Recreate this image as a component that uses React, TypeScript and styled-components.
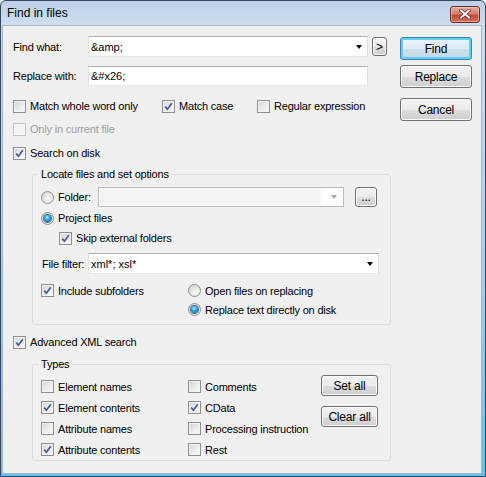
import React from 'react';
import styled, { createGlobalStyle } from 'styled-components';

const GlobalStyle = createGlobalStyle`
  html, body { margin: 0; padding: 0; background: #ffffff; }
  body {
    font-family: "Liberation Sans", Arial, sans-serif;
    font-size: 11px;
    color: #000;
  }
`;

const Window = styled.div`
  box-sizing: border-box;
  width: 486px;
  height: 477px;
  border: 1px solid #34495e;
  border-radius: 6px 6px 0 0;
  background: linear-gradient(#bcd0e9 0, #cfdeef 24px, #a9d0ec 55%, #62c3ef 100%);
  display: flex;
  flex-direction: column;
`;

const TitleBar = styled.div`
  height: 24px;
  flex-shrink: 0;
  display: flex;
  align-items: center;
  justify-content: space-between;
  padding: 0 5px 0 6px;
  font-size: 12px;
`;

const CloseButton = styled.div`
  box-sizing: border-box;
  width: 30px;
  height: 17px;
  margin-top: 2px;
  border: 1px solid #6b2a22;
  border-radius: 3px;
  background: linear-gradient(#e9a99b 0, #d47f6e 45%, #c4493a 55%, #d0705a 100%);
  box-shadow: inset 0 0 0 1px rgba(255, 220, 210, 0.5);
  display: flex;
  align-items: center;
  justify-content: center;
`;

const Client = styled.div`
  flex: 1;
  margin: 0 3px 2px 1px;
  border: 1px solid #9fb6cd;
  background: #f0f0f0;
  padding: 10px 9px 0 10px;
  display: flex;
  align-items: flex-start;
  letter-spacing: -0.2px;
`;

const LeftCol = styled.div`
  flex: 1;
  display: flex;
  flex-direction: column;
`;

const ButtonCol = styled.div`
  width: 72px;
  margin-top: 1px;
  display: flex;
  flex-direction: column;
`;

const Row = styled.div<{ $h?: number; $mt?: number; $indent?: number }>`
  display: flex;
  align-items: center;
  height: ${p => p.$h ?? 20}px;
  margin-top: ${p => p.$mt ?? 0}px;
  padding-left: ${p => p.$indent ?? 0}px;
`;

const OptionRow = styled.div`
  display: grid;
  grid-template-columns: 149px 95px auto;
  align-items: center;
  height: 20px;
  margin-top: 10px;
`;

const FieldLabel = styled.span<{ $w: number; $pl?: number }>`
  width: ${p => p.$w}px;
  padding-left: ${p => p.$pl ?? 0}px;
  box-sizing: border-box;
  flex-shrink: 0;
  white-space: nowrap;
`;

const Field = styled.div<{ $w: number; $h: number; $disabled?: boolean }>`
  box-sizing: border-box;
  width: ${p => p.$w}px;
  height: ${p => p.$h}px;
  flex-shrink: 0;
  display: flex;
  align-items: center;
  border: 1px solid;
  border-color: ${p => (p.$disabled ? '#b8bcc0' : '#abadb3 #dbdfe6 #e3e9ef #e2e3ea')};
  background: #fff;
  padding: ${p => (p.$disabled ? '1px 6px 1px 1px' : '0 5px 0 2px')};
`;

const FieldText = styled.span`
  flex: 1;
  white-space: nowrap;
  letter-spacing: 0;
`;

const DisabledEdit = styled.span`
  flex: 1;
  align-self: stretch;
  margin-right: 10px;
  background: #f4f4f4;
`;

const Arrow = styled.span<{ $disabled?: boolean }>`
  width: 0;
  height: 0;
  border-left: 3.5px solid transparent;
  border-right: 3.5px solid transparent;
  border-top: 4px solid ${p => (p.$disabled ? '#a5a5a5' : '#000')};
`;

const PushButton = styled.div<{ $w: number; $h: number; $default?: boolean; $mt?: number; $ml?: number }>`
  box-sizing: border-box;
  width: ${p => p.$w}px;
  height: ${p => p.$h}px;
  margin-top: ${p => p.$mt ?? 0}px;
  margin-left: ${p => p.$ml ?? 0}px;
  flex-shrink: 0;
  display: flex;
  align-items: center;
  justify-content: center;
  border: 1px solid ${p => (p.$default ? '#3c7fb1' : '#707070')};
  border-radius: 3px;
  background: ${p =>
    p.$default
      ? 'linear-gradient(#eaf4fa 0, #dceaf3 50%, #cddfea 51%, #c4d9e6 100%)'
      : 'linear-gradient(#f2f2f2 0, #ebebeb 50%, #dddddd 51%, #cfcfcf 100%)'};
  box-shadow: ${p => (p.$default ? 'inset 0 0 0 2px #5fcff6' : 'inset 0 0 0 1px #fbfbfb')};
  font-size: 12px;
  letter-spacing: -0.2px;
  white-space: nowrap;
`;

const Choice = styled.label<{ $disabled?: boolean }>`
  display: inline-flex;
  align-items: center;
  gap: 4px;
  white-space: nowrap;
  color: ${p => (p.$disabled ? '#9d9d9d' : '#000')};
`;

const Box = styled.span<{ $disabled?: boolean }>`
  box-sizing: border-box;
  width: 13px;
  height: 13px;
  flex-shrink: 0;
  display: flex;
  align-items: center;
  justify-content: center;
  border: 1px solid ${p => (p.$disabled ? '#c5c5c5' : '#8e8f8f')};
  background: ${p => (p.$disabled ? '#f4f4f4' : 'linear-gradient(135deg, #d3d4d6 0, #eeeeef 60%, #fafafa 100%)')};
  box-shadow: inset 0 0 0 1px ${p => (p.$disabled ? '#f7f7f7' : '#f4f4f4')};
`;

const Circle = styled.span<{ $on?: boolean }>`
  box-sizing: border-box;
  width: 13px;
  height: 13px;
  flex-shrink: 0;
  border-radius: 50%;
  border: 1px solid #8e8f8f;
  background: radial-gradient(circle at 65% 70%, #fbfbfb 0, #e6e6e6 45%, #cfd0d2 100%);
  display: flex;
  align-items: center;
  justify-content: center;

  &::after {
    content: '';
    display: ${p => (p.$on ? 'block' : 'none')};
    width: 7px;
    height: 7px;
    border-radius: 50%;
    background: radial-gradient(circle at 45% 35%, #b8f0ff 0, #2ea4e4 40%, #0c4f86 100%);
    box-shadow: 0 0 0 1px #3b6d8f;
  }
`;

const Group = styled.fieldset<{ $mt: number }>`
  box-sizing: border-box;
  width: 359px;
  margin: ${p => p.$mt}px 0 0 19px;
  padding: 0;
  border: 1px solid #d5dfe5;
  border-radius: 3px;
  min-inline-size: 0;
`;

const GroupTitle = styled.legend`
  margin-left: 5px;
  padding: 0 3px;
  line-height: 14px;
`;

const GroupBody = styled.div<{ $pt: number; $pb: number }>`
  padding: ${p => p.$pt}px 0 ${p => p.$pb}px 8px;
  display: flex;
  flex-direction: column;
`;

const SubfolderGrid = styled.div`
  display: grid;
  grid-template-columns: 147px 1fr;
  grid-auto-rows: 19px;
  align-items: center;
  margin-top: 7px;
`;

const TypesGrid = styled.div`
  display: grid;
  grid-template-columns: 147px 133px 57px;
  grid-auto-rows: 21px;
  align-items: center;
`;

const TypesButtons = styled.div`
  grid-column: 3;
  grid-row: 1 / span 4;
  align-self: start;
  display: flex;
  flex-direction: column;
`;

const Check: React.FC<{ label: string; checked?: boolean; disabled?: boolean }> = ({ label, checked, disabled }) => (
  <Choice $disabled={disabled}>
    <Box $disabled={disabled}>
      {checked && (
        <svg width="9" height="9" viewBox="0 0 9 9">
          <path d="M1.2 4.6 L3.4 7.2 L7.8 1.2" fill="none" stroke="#3f5b9d" strokeWidth="1.7" strokeLinejoin="miter" />
        </svg>
      )}
    </Box>
    {label}
  </Choice>
);

const Radio: React.FC<{ label: string; on?: boolean; w?: number }> = ({ label, on, w }) => (
  <Choice style={w ? { width: w } : undefined}>
    <Circle $on={on} />
    {label}
  </Choice>
);

const CloseGlyph = () => (
  <svg width="12" height="10" viewBox="0 0 12 10">
    <path d="M2 1.5 L10 8.5 M10 1.5 L2 8.5" stroke="#5a2018" strokeWidth="3.4" strokeLinecap="square" />
    <path d="M2 1.5 L10 8.5 M10 1.5 L2 8.5" stroke="#ffffff" strokeWidth="2" strokeLinecap="square" />
  </svg>
);

export default function App() {
  return (
    <>
      <GlobalStyle />
      <Window>
        <TitleBar>
          <span>Find in files</span>
          <CloseButton>
            <CloseGlyph />
          </CloseButton>
        </TitleBar>
        <Client>
          <LeftCol>
            <Row $h={21}>
              <FieldLabel $w={75}>Find what:</FieldLabel>
              <Field $w={280} $h={21}>
                <FieldText>{'&amp;'}</FieldText>
                <Arrow />
              </Field>
              <PushButton $w={15} $h={19} $ml={4}>&gt;</PushButton>
            </Row>
            <Row $mt={9}>
              <FieldLabel $w={75}>Replace with:</FieldLabel>
              <Field $w={280} $h={20}>
                <FieldText>{'&#x26;'}</FieldText>
              </Field>
            </Row>
            <OptionRow>
              <Check label="Match whole word only" />
              <Check label="Match case" checked />
              <Check label="Regular expression" />
            </OptionRow>
            <Row $mt={3}>
              <Check label="Only in current file" disabled />
            </Row>
            <Row $mt={4}>
              <Check label="Search on disk" checked />
            </Row>

            <Group $mt={4}>
              <GroupTitle>Locate files and set options</GroupTitle>
              <GroupBody $pt={6} $pb={5}>
                <Row>
                  <Radio label="Folder:" w={57} />
                  <Field $w={246} $h={20} $disabled>
                    <DisabledEdit />
                    <Arrow $disabled />
                  </Field>
                  <PushButton $w={22} $h={20} $ml={11}>...</PushButton>
                </Row>
                <Row $mt={1}>
                  <Radio label="Project files" on />
                </Row>
                <Row $indent={18}>
                  <Check label="Skip external folders" checked />
                </Row>
                <Row $mt={5} $h={21}>
                  <FieldLabel $w={47} $pl={1}>File filter:</FieldLabel>
                  <Field $w={291} $h={21}>
                    <FieldText>xml*; xsl*</FieldText>
                    <Arrow />
                  </Field>
                </Row>
                <SubfolderGrid>
                  <Check label="Include subfolders" checked />
                  <Radio label="Open files on replacing" />
                  <span />
                  <Radio label="Replace text directly on disk" on />
                </SubfolderGrid>
              </GroupBody>
            </Group>

            <Row $mt={7}>
              <Check label="Advanced XML search" checked />
            </Row>

            <Group $mt={5}>
              <GroupTitle>Types</GroupTitle>
              <GroupBody $pt={5} $pb={0}>
                <TypesGrid>
                  <Check label="Element names" />
                  <Check label="Comments" />
                  <TypesButtons>
                    <PushButton $w={57} $h={21} $mt={-1}>Set all</PushButton>
                    <PushButton $w={57} $h={21} $mt={10}>Clear all</PushButton>
                  </TypesButtons>
                  <Check label="Element contents" checked />
                  <Check label="CData" checked />
                  <Check label="Attribute names" />
                  <Check label="Processing instruction" />
                  <Check label="Attribute contents" checked />
                  <Check label="Rest" />
                </TypesGrid>
              </GroupBody>
            </Group>
          </LeftCol>

          <ButtonCol>
            <PushButton $w={72} $h={23} $default>Find</PushButton>
            <PushButton $w={72} $h={23} $mt={5}>Replace</PushButton>
            <PushButton $w={72} $h={23} $mt={10}>Cancel</PushButton>
          </ButtonCol>
        </Client>
      </Window>
    </>
  );
}
